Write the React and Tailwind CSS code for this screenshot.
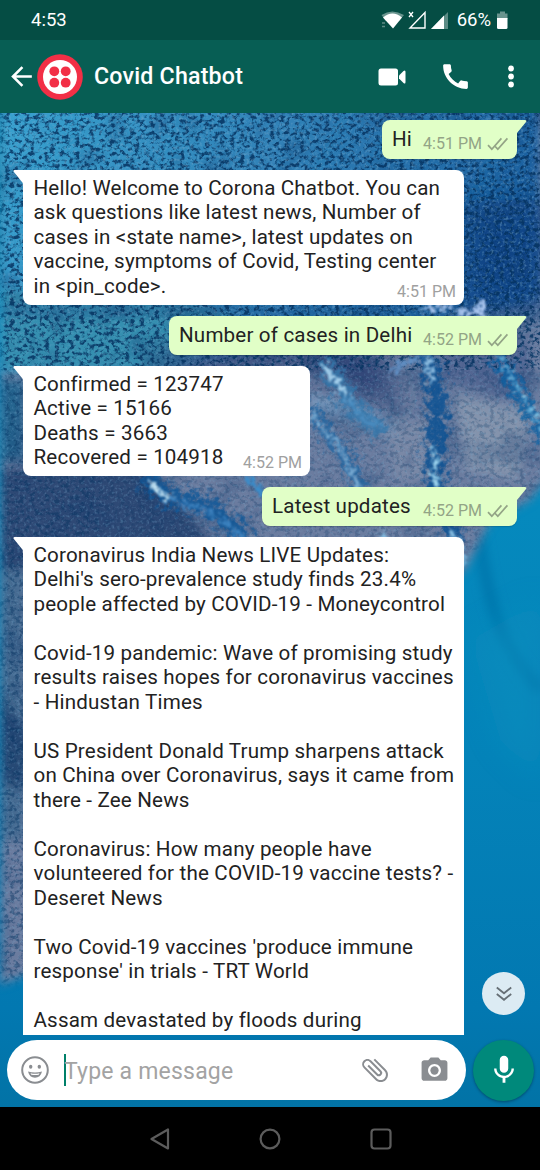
import { MdArrowBack, MdCall, MdMic, MdAttachFile, MdPhotoCamera } from "react-icons/md";

const NEWS = [
  ["Coronavirus India News LIVE Updates:", "Delhi's sero-prevalence study finds 23.4%", "people affected by COVID-19 - Moneycontrol"],
  ["Covid-19 pandemic: Wave of promising study", "results raises hopes for coronavirus vaccines", "- Hindustan Times"],
  ["US President Donald Trump sharpens attack", "on China over Coronavirus, says it came from", "there - Zee News"],
  ["Coronavirus: How many people have", "volunteered for the COVID-19 vaccine tests? -", "Deseret News"],
  ["Two Covid-19 vaccines 'produce immune", "response' in trials - TRT World"],
  ["Assam devastated by floods during"],
];

function Wallpaper() {
  return (
    <svg className="absolute inset-0 h-full w-full" viewBox="0 113 540 994" preserveAspectRatio="none" aria-hidden="true">
      <defs>
        <linearGradient id="sea" x1="0" y1="0" x2="0" y2="1">
          <stop offset="0" stopColor="#0797c4" />
          <stop offset="0.4" stopColor="#0589bd" />
          <stop offset="0.65" stopColor="#0483b9" />
          <stop offset="0.9" stopColor="#0278b1" />
          <stop offset="1" stopColor="#0273a6" />
        </linearGradient>
        <linearGradient id="fade" x1="0" y1="0" x2="1" y2="0.25">
          <stop offset="0" stopColor="#38a3d0" />
          <stop offset="0.5" stopColor="#3183b8" />
          <stop offset="1" stopColor="#1b609f" />
        </linearGradient>
        <filter id="soft" x="-30%" y="-30%" width="160%" height="160%"><feGaussianBlur stdDeviation="14" /></filter>
        <filter id="edge" x="-10%" y="-10%" width="120%" height="120%"><feGaussianBlur stdDeviation="5" /></filter>
        <filter id="darkGrain" x="0" y="0" width="100%" height="100%" colorInterpolationFilters="sRGB">
          <feTurbulence type="fractalNoise" baseFrequency="0.2 0.25" numOctaves="3" seed="4" />
          <feColorMatrix values="0 0 0 0 0.02  0 0 0 0 0.2  0 0 0 0 0.38  5 0 0 0 -2.35" />
        </filter>
        <filter id="lightGrain" x="0" y="0" width="100%" height="100%" colorInterpolationFilters="sRGB">
          <feTurbulence type="fractalNoise" baseFrequency="0.34" numOctaves="2" seed="11" />
          <feColorMatrix values="0 0 0 0 0.46  0 0 0 0 0.66  0 0 0 0 0.8  0 3 0 0 -1.5" />
        </filter>
        <filter id="patches" x="0" y="0" width="100%" height="100%" colorInterpolationFilters="sRGB">
          <feTurbulence type="fractalNoise" baseFrequency="0.03" numOctaves="3" seed="21" />
          <feColorMatrix values="0 0 0 0 0.07  0 0 0 0 0.22  0 0 0 0 0.42  0 0 4 0 -2" />
        </filter>
        <filter id="channel" x="-20%" y="-20%" width="140%" height="140%" colorInterpolationFilters="sRGB">
          <feTurbulence type="fractalNoise" baseFrequency="0.15" numOctaves="3" seed="9" result="n" />
          <feGaussianBlur in="SourceGraphic" stdDeviation="3.5" result="b" />
          <feDisplacementMap in="b" in2="n" scale="32" xChannelSelector="R" yChannelSelector="G" />
        </filter>
        <filter id="foam" x="-40%" y="-20%" width="180%" height="140%" colorInterpolationFilters="sRGB">
          <feTurbulence type="fractalNoise" baseFrequency="0.22" numOctaves="3" seed="7" result="n" />
          <feDisplacementMap in="SourceGraphic" in2="n" scale="20" xChannelSelector="R" yChannelSelector="G" />
          <feGaussianBlur stdDeviation="0.9" />
        </filter>
        <mask id="shore">
          <path d="M0 100H550V475L530 500L490 522L465 570L300 700L40 970L0 985Z" fill="#fff" filter="url(#edge)" />
        </mask>
      </defs>
      <rect y="113" width="540" height="994" fill="url(#sea)" />
      <path d="M478 535C490 600 495 640 540 690" stroke="#0578ae" strokeWidth="12" fill="none" filter="url(#edge)" />
      <path d="M470 640L540 600V780L500 740Z" fill="#078fbe" opacity="0.5" filter="url(#soft)" />
      <g mask="url(#shore)">
        <rect y="100" width="540" height="900" fill="#6b7c9f" />
        <path d="M0 540H24V840H0Z" fill="#456a91" filter="url(#edge)" />
        <path d="M0 100H540V300L420 325L290 350L180 365L0 372Z" fill="url(#fade)" filter="url(#edge)" />
        <path d="M0 290H170L260 330L170 370H0Z" fill="#348fb0" filter="url(#edge)" />
        <path d="M465 200H545V310L465 315Z" fill="#0f4182" opacity="0.85" filter="url(#soft)" />
        <path d="M0 303H540V318H0Z" fill="#164a80" opacity="0.35" filter="url(#edge)" />
        <path d="M150 352L310 335L380 352L400 410L340 385L310 365L160 372Z" fill="#2a4173" filter="url(#soft)" />
        <path d="M0 470L150 465L215 545L0 570Z" fill="#2f4874" filter="url(#edge)" />
        <path d="M0 380H24V460H0Z" fill="#256690" filter="url(#edge)" />
        <path d="M0 690L30 740L20 790L0 780Z" fill="#274a75" filter="url(#edge)" />
        <path d="M440 350L530 340V380L510 400L440 380Z" fill="#526692" filter="url(#edge)" />
        <path d="M310 395L350 400L400 425L395 435L350 420L310 412Z" fill="#7c9fc3" opacity="0.8" filter="url(#edge)" />
        <path d="M455 395L530 410L520 480L465 470Z" fill="#8f9db2" opacity="0.7" filter="url(#edge)" />
        <path d="M385 415L430 425V480H395Z" fill="#8491ab" opacity="0.6" filter="url(#edge)" />
        <rect y="100" width="540" height="900" filter="url(#patches)" opacity="0.25" />
        <rect y="100" width="540" height="270" filter="url(#darkGrain)" opacity="0.85" />
        <rect y="100" width="540" height="230" filter="url(#lightGrain)" opacity="0.45" />
        <rect y="370" width="100" height="630" filter="url(#darkGrain)" opacity="0.45" />
        <rect x="100" y="370" width="440" height="180" filter="url(#darkGrain)" opacity="0.25" />
        <rect y="330" width="540" height="670" filter="url(#lightGrain)" opacity="0.32" />
        <g fill="none">
          <g filter="url(#channel)" opacity="0.85">
            <path d="M428 350L435 385Q441 430 434 455L437 490L455 540" stroke="#095092" strokeWidth="17" />
            <path d="M496 352Q515 390 545 438" stroke="#0760a3" strokeWidth="12" />
            <path d="M309 410L345 455L361 492" stroke="#1f64a0" strokeWidth="12" />
            <path d="M144 478L165 495L205 505L250 540" stroke="#0e5798" strokeWidth="16" />
            <path d="M326 362L342 390L362 418L385 432" stroke="#3477ab" strokeWidth="16" />
          </g>
          <g filter="url(#foam)">
            <path d="M426 350L432 385" stroke="#8dbce0" strokeWidth="5" />
            <path d="M434 448L436 488" stroke="#9cd4ee" strokeWidth="4" />
            <path d="M500 354Q518 390 544 430" stroke="#83cbec" strokeWidth="2.5" />
            <path d="M310 413L340 449L361 490" stroke="#7eb0d6" strokeWidth="3.500" />
            <path d="M323 365L340 386L350 402" stroke="#a2cdea" strokeWidth="5" />
            <path d="M345 395L360 415L380 425" stroke="#4c8fc3" strokeWidth="4" />
            <path d="M390 372L405 362L420 358" stroke="#5f8fc4" strokeWidth="5" />
            <path d="M158 490L172 500L210 512L245 538" stroke="#3d83c0" strokeWidth="4" />
            <path d="M148 480L160 493L172 497" stroke="#c2e2f2" strokeWidth="4" />
            <path d="M247 475L268 500" stroke="#3a8cca" strokeWidth="6" />
            <path d="M422 308L452 306M455 312L483 312M480 301L484 317" stroke="#a8c4ee" strokeWidth="6" />
            <path d="M380 535L395 550M450 530L466 565" stroke="#85bce0" strokeWidth="5" />
          </g>
        </g>
      </g>
    </svg>
  );
}

function Ticks() {
  return (
    <svg width="22" height="14" viewBox="0 0 22 14" fill="none" stroke="#93a486" strokeWidth="1.7" className="ml-[5px]">
      <path d="M1 8.2L4.8 12.2L14.4 1.4M8.2 9.5L10.8 12.2L20.4 1.4" />
    </svg>
  );
}

function Sent({ text, time, className }) {
  return (
    <div className={`relative mr-[23px] flex h-[39px] shrink-0 items-start self-end rounded-lg rounded-tr-none bg-[#e1ffc7] pl-[10px] shadow-[0_1px_1px_rgba(0,0,0,0.15)] ${className}`}>
      <svg className="absolute -right-[10px] top-0" width="11" height="15" viewBox="0 0 11 15"><path d="M0 0H9Q11 0 10.2 1.8L1 13V15H0Z" fill="#e1ffc7" /></svg>
      <span className="mt-[7px] whitespace-nowrap">{text}</span>
      <span className="ml-auto mr-[8px] mt-[12px] flex items-center text-[16px] tracking-normal text-[#93a486]">{time}<Ticks /></span>
    </div>
  );
}

function Received({ children, time, className }) {
  return (
    <div className={`relative ml-[23px] shrink-0 self-start rounded-lg rounded-tl-none bg-white pl-[10.500px] pt-[5.500px] ${className}`}>
      <svg className="absolute -left-[10px] top-0" width="11" height="16" viewBox="0 0 11 16"><path d="M11 0H1.5Q0 0 .5 1.5L9.8 13V16H11Z" fill="#fff" /></svg>
      {children}
      {time && <span className="absolute bottom-[1px] right-[8px] text-[16px] tracking-normal text-[#a0a0a0]">{time}</span>}
    </div>
  );
}

function StatusBar() {
  return (
    <div className="flex h-10 shrink-0 items-center bg-[#054d44] pl-[31px] pr-[32px] text-[18px] text-white">
      <span className="mt-[2px] text-[18.500px]">4:53</span>
      <svg className="ml-auto" width="70" height="20" viewBox="380 10 70 20">
        <path d="M380.5 15Q391 8 403 15L398 21Q391 16 385 21Z" fill="#fff" opacity="0.4" />
        <path d="M382 17.5Q391.500 9.500 401 17.500L392 28.500Z" fill="#fff" />
        <path d="M381 23H384M381 26.500H384" stroke="#fff" strokeWidth="1.500" opacity="0.35" />
        <path d="M408 12L412 17M412 12L408 17" stroke="#fff" strokeWidth="1.300" />
        <path d="M424 12.500V28H409Z" fill="none" stroke="#fff" strokeWidth="1.400" />
        <path d="M447 12V29H430Z" fill="#fff" opacity="0.35" />
        <path d="M443 15.500V29H430Z" fill="#fff" />
      </svg>
      <span className="ml-[6px] mt-[2px] text-[18.500px]">66%</span>
      <svg className="ml-[6px]" width="11" height="20" viewBox="0 0 11 20">
        <path d="M3 1.500H8V3.500H10.500V9H0V3.500H3Z" fill="#fff" opacity="0.4" />
        <path d="M0 8H10.500V17.500Q10.500 19 9 19H1.500Q0 19 0 17.500Z" fill="#fff" />
      </svg>
    </div>
  );
}

function Header() {
  return (
    <header className="flex h-[73px] shrink-0 items-center bg-[#075e54] pr-[26px] text-white">
      <MdArrowBack className="ml-[6px] size-[31px]" />
      <svg className="size-[46px]" viewBox="0 0 46 46">
        <circle cx="23" cy="23" r="22.800" fill="#f22f46" />
        <circle cx="23" cy="23" r="17" fill="#fff" />
        <g fill="#f22f46">
          <circle cx="17.300" cy="17.300" r="4.900" /><circle cx="28.700" cy="17.300" r="4.900" />
          <circle cx="17.300" cy="28.700" r="4.900" /><circle cx="28.700" cy="28.700" r="4.900" />
        </g>
      </svg>
      <h1 className="ml-[11px] whitespace-nowrap text-[23.200px] font-medium tracking-[0.2px]">Covid Chatbot</h1>
      <svg className="ml-auto" width="28" height="18" viewBox="0 0 28 18" fill="white">
        <rect x="0.500" y="0.500" width="19.500" height="17" rx="2.500" />
        <path d="M21 7.500L25.500 3Q27.500 1.500 27.500 4V14Q27.500 16.500 25.500 15L21 10.500Z" />
      </svg>
      <MdCall className="ml-[33px] size-[33px]" />
      <svg className="ml-[36px]" width="6" height="23" viewBox="0 0 6 23" fill="white">
        <circle cx="3" cy="3.500" r="2.900" /><circle cx="3" cy="11.500" r="2.900" /><circle cx="3" cy="19.500" r="2.900" />
      </svg>
    </header>
  );
}

function Composer() {
  return (
    <div className="flex h-[60px] shrink-0 items-center pl-[7px]">
      <div className="flex h-[60px] w-[459px] items-center rounded-full bg-white">
        <svg className="ml-[14px]" width="28" height="28" viewBox="0 0 28 28">
          <circle cx="14" cy="14" r="12.800" fill="none" stroke="#8a8d91" strokeWidth="2" />
          <ellipse cx="9.700" cy="10.700" rx="1.700" ry="2" fill="#8a8d91" />
          <ellipse cx="18.300" cy="10.700" rx="1.700" ry="2" fill="#8a8d91" />
          <path d="M7 15.500Q14 17.500 21 15.500Q19.500 21.700 14 21.700Q8.500 21.700 7 15.500Z" fill="#8a8d91" />
          <path d="M9.500 17.200Q14 18.300 18.500 17.200L17.700 18.700Q14 19.500 10.300 18.700Z" fill="#fff" />
        </svg>
        <span className="ml-[15px] h-8 w-[2px] bg-[#008069]" />
        <span className="-ml-[2px] mt-[5px] text-[23px] tracking-[0.2px] text-[#a3a3a3]">Type a message</span>
        <MdAttachFile className="ml-auto mr-[28px] size-[32px] -rotate-45 text-[#8a8d91]" />
        <MdPhotoCamera className="mr-[16px] size-[31px] text-[#8a8d91]" />
      </div>
      <button aria-label="Record voice message" className="ml-[7px] flex size-[61px] items-center justify-center rounded-full bg-[#00897b] text-white shadow-[0_1px_3px_rgba(0,0,0,0.35)]">
        <MdMic className="size-[34px]" />
      </button>
    </div>
  );
}

function NavBar() {
  return (
    <nav className="flex h-[63px] shrink-0 items-center bg-black pl-[149px]">
      <svg width="22" height="22" viewBox="0 0 22 22" fill="none" stroke="#5c5c5c" strokeWidth="2.200" strokeLinejoin="round"><path d="M19 1.500V20.500L2.500 11Z" /></svg>
      <svg className="ml-[88px]" width="22" height="22" viewBox="0 0 22 22"><circle cx="11" cy="11" r="9.400" fill="none" stroke="#5c5c5c" strokeWidth="2.200" /></svg>
      <svg className="ml-[89px]" width="22" height="22" viewBox="0 0 22 22"><rect x="1.500" y="1.500" width="19" height="19" rx="3" fill="none" stroke="#5c5c5c" strokeWidth="2.200" /></svg>
    </nav>
  );
}

export default function App() {
  return (
    <div className="flex h-[1170px] w-[540px] flex-col overflow-hidden font-['Roboto',sans-serif]">
      <StatusBar />
      <Header />
      <main className="relative flex h-[994px] flex-col overflow-hidden">
        <Wallpaper />
        <section className="relative flex h-[922px] shrink-0 flex-col gap-[11px] overflow-hidden pt-[7px] text-[20.600px] leading-[24.500px] tracking-[0.17px] text-[#222]">
          <Sent text="Hi" time="4:51 PM" className="w-[135px]" />
          <Received time="4:51 PM" className="h-[135px] w-[441px]">
            <p>Hello! Welcome to Corona Chatbot. You can<br />ask questions like latest news, Number of<br />cases in &lt;state name&gt;, latest updates on<br />vaccine, symptoms of Covid, Testing center<br />in &lt;pin_code&gt;.</p>
          </Received>
          <Sent text="Number of cases in Delhi" time="4:52 PM" className="w-[348px]" />
          <Received time="4:52 PM" className="h-[110px] w-[287px]">
            <p>Confirmed = 123747<br />Active = 15166<br />Deaths = 3663<br />Recovered = 104918</p>
          </Received>
          <Sent text="Latest updates" time="4:52 PM" className="w-[255px]" />
          <Received className="h-[560px] w-[441px]">
            <div className="flex flex-col gap-[24.500px]">
              {NEWS.map((item) => (
                <p key={item[0]} className="whitespace-nowrap">
                  {item.map((line) => <span key={line} className="block">{line}</span>)}
                </p>
              ))}
            </div>
          </Received>
          <button aria-label="Scroll to latest" className="absolute bottom-[20px] right-[15px] flex size-[43px] items-center justify-center rounded-full bg-[#dcebf3]">
            <svg width="16" height="16" viewBox="0 0 16 16" fill="none" stroke="#666f75" strokeWidth="1.800"><path d="M.8 1.500L8 7.300L15.200 1.500M.8 8L8 13.800L15.200 8" /></svg>
          </button>
        </section>
        <div className="relative mt-[5px]"><Composer /></div>
      </main>
      <NavBar />
    </div>
  );
}
